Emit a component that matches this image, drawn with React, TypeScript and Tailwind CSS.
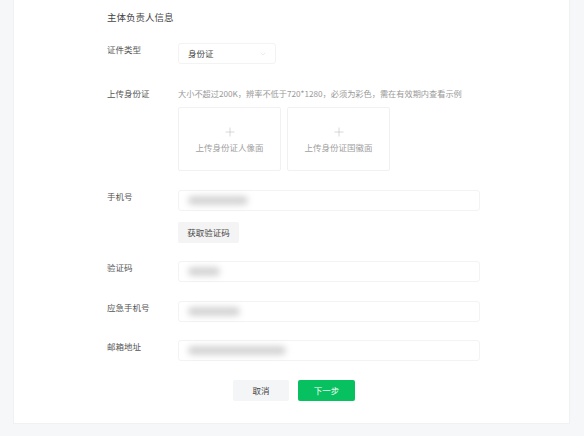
import { ChevronDown, Plus } from "lucide-react";

const font = { fontFamily: '"Noto Sans CJK SC", "Noto Sans", sans-serif' };

function Blur({ w }: { w: number }) {
  return (
    <div className="flex h-full items-center pl-[9px]">
      <div className="h-[9px] rounded-full bg-[#d4d4d4] blur-[3px]" style={{ width: w }} />
    </div>
  );
}

function Label({ children }: { children: React.ReactNode }) {
  return <div className="w-[71px] shrink-0 text-[8.5px] leading-[12px] text-[#555]">{children}</div>;
}

function Input({ w }: { w: number }) {
  return (
    <div className="h-[21px] w-[302px] rounded-[3px] border border-[#f3f3f3] bg-white">
      <Blur w={w} />
    </div>
  );
}

function UploadBox({ text }: { text: string }) {
  return (
    <div className="flex h-[64px] w-[103px] flex-col items-center justify-center rounded-[2px] border border-[#f1f1f1] bg-white">
      <Plus className="size-[14px] text-[#c4c4c4]" strokeWidth={1.1} />
      <div className="mt-[2px] text-[8.5px] leading-[12px] text-[#a0a0a0]">{text}</div>
    </div>
  );
}

export default function App() {
  return (
    <div className="h-[436px] w-[584px] overflow-hidden bg-[#f6f7f9] pl-[13px] pr-[14px]" style={font}>
      <div className="h-[424px] border-x border-b border-[#f0f1f3] bg-white pl-[93px]">
        <div className="pt-[10px] text-[9.5px] leading-[14px] text-[#444]">主体负责人信息</div>

        {/* 证件类型 */}
        <div className="mt-[19px] flex">
          <Label>证件类型</Label>
          <div className="flex h-[21px] w-[98px] items-center justify-between rounded-[3px] border border-[#f3f3f3] pl-[9px] pr-[8px]">
            <span className="text-[8.5px] text-[#444]">身份证</span>
            <ChevronDown className="size-[8px] text-[#d0d0d0]" strokeWidth={1.2} />
          </div>
        </div>

        {/* 上传身份证 */}
        <div className="mt-[23px] flex">
          <Label>上传身份证</Label>
          <div>
            <div className="text-[8.2px] leading-[12px] text-[#999]">
              大小不超过200K，辨率不低于720*1280，必须为彩色，需在有效期内查看示例
            </div>
            <div className="mt-[8px] flex gap-[6px]">
              <UploadBox text="上传身份证人像面" />
              <UploadBox text="上传身份证国徽面" />
            </div>
          </div>
        </div>

        {/* 手机号 */}
        <div className="mt-[19px] flex">
          <Label>手机号</Label>
          <div>
            <Input w={60} />
            <button className="mt-[11px] h-[21px] w-[61px] rounded-[2px] bg-[#f4f4f4] text-[8.5px] text-[#444]">
              获取验证码
            </button>
          </div>
        </div>

        <div className="mt-[18px] flex">
          <Label>验证码</Label>
          <Input w={32} />
        </div>

        <div className="mt-[19px] flex">
          <Label>应急手机号</Label>
          <Input w={52} />
        </div>

        <div className="mt-[18px] flex">
          <Label>邮箱地址</Label>
          <Input w={98} />
        </div>

        <div className="mt-[19px] flex gap-[9px] pl-[126px]">
          <button className="h-[21px] w-[56px] rounded-[2px] bg-[#f4f5f6] text-[8.5px] text-[#444]">取消</button>
          <button className="h-[21px] w-[57px] rounded-[2px] bg-[#07c160] text-[8.5px] text-white">下一步</button>
        </div>
      </div>
    </div>
  );
}
